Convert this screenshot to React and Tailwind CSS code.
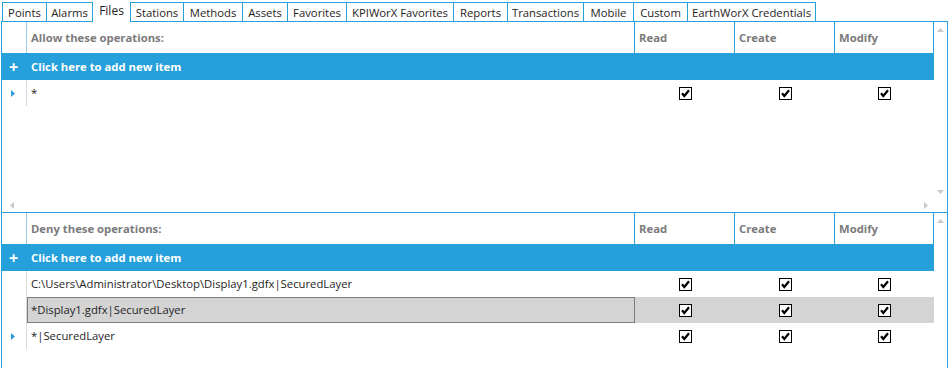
import React from "react";

const tabs = [
  { label: "Points", w: "w-[44px]", cls: "border-l border-t" },
  { label: "Alarms", w: "w-[47px]", cls: "border-l border-r border-t" },
  { label: "Files", w: "w-[37px]", selected: true },
  { label: "Stations", w: "w-[53px]", cls: "border-l border-t" },
  { label: "Methods", w: "w-[59px]", cls: "border-l border-t" },
  { label: "Assets", w: "w-[45px]", cls: "border-l border-t" },
  { label: "Favorites", w: "w-[59px]", cls: "border-l border-t" },
  { label: "KPIWorX Favorites", w: "w-[107px]", cls: "border-l border-t" },
  { label: "Reports", w: "w-[54px]", cls: "border-l border-t" },
  { label: "Transactions", w: "w-[76px]", cls: "border-l border-t" },
  { label: "Mobile", w: "w-[50px]", cls: "border-l border-t" },
  { label: "Custom", w: "w-[54px]", cls: "border-l border-t" },
  { label: "EarthWorX Credentials", w: "w-[129px]", cls: "border-l border-r border-t" },
];

function Check() {
  return (
    <svg width="13" height="13" viewBox="0 0 13 13" className="block">
      <rect x="0.5" y="0.5" width="12" height="12" fill="white" stroke="#000" />
      <polyline points="3,6.3 5.3,9 10,3.3" fill="none" stroke="#000" strokeWidth="2.2" />
    </svg>
  );
}

function RowArrow() {
  return (
    <svg width="5" height="7" viewBox="0 0 5 7" className="block">
      <polygon points="0,0 4,3.5 0,7" fill="#2a9de0" />
    </svg>
  );
}

function Tri({ dir }) {
  const pts = {
    up: "0,4 3.5,0 7,4",
    down: "0,0 3.5,4 7,0",
    left: "4,0 0,3.5 4,7",
    right: "0,0 4,3.5 0,7",
  }[dir];
  const vert = dir === "up" || dir === "down";
  return (
    <svg width={vert ? 7 : 4} height={vert ? 4 : 7} className="block">
      <polygon points={pts} fill="#c9c9c9" />
    </svg>
  );
}

function HeaderRow({ title }) {
  return (
    <div className="flex h-[31px] text-[11.3px] font-bold text-[#7b7b7b]">
      <div className="w-[25px] border-r border-[#9cc9e6]" />
      <div className="w-[608px] border-r border-[#26a0da] flex items-center pl-[4px] pt-[1px]">{title}</div>
      <div className="w-[100px] border-r border-[#26a0da] flex items-center pl-[4px] pt-[1px]">Read</div>
      <div className="w-[100px] border-r border-[#26a0da] flex items-center pl-[4px] pt-[1px]">Create</div>
      <div className="w-[99px] border-r border-[#26a0da] flex items-center pl-[4px] pt-[1px]">Modify</div>
    </div>
  );
}

function AddRow() {
  return (
    <div className="flex h-[27px] bg-[#26a0da] text-white text-[11.3px] font-bold items-center">
      <div className="w-[25px] flex justify-center text-[16px] leading-none font-bold pr-[2px]">+</div>
      <div className="pl-[4px] pt-[1px]">Click here to add new item</div>
    </div>
  );
}

function DataRow({ text, arrow, selected }) {
  return (
    <div className="flex h-[26px] text-[11.3px] text-[#1e1e1e]">
      <div className="w-[25px] border-r border-[#d9d9d9] flex items-center justify-center pr-[2px]">
        {arrow && <RowArrow />}
      </div>
      <div className={`flex flex-1 ${selected ? "bg-[#d5d4d5]" : ""}`}>
        <div className={`w-[608px] flex items-center pt-[1px] ${selected ? "border border-[#7d7d7d] pl-[3px]" : "pl-[4px]"}`}>
          {text}
        </div>
        <div className="w-[100px] flex items-center justify-center"><Check /></div>
        <div className="w-[100px] flex items-center justify-center"><Check /></div>
        <div className="w-[99px] flex items-center justify-center"><Check /></div>
      </div>
    </div>
  );
}

export default function App() {
  return (
    <div className="w-[952px] h-[368px] bg-white overflow-hidden pl-px" style={{ fontFamily: '"Segoe UI", "Open Sans", "Liberation Sans", sans-serif' }}>
      <div className="flex items-end h-[21px] ml-px">
        {tabs.map((t) =>
          t.selected ? (
            <div
              key={t.label}
              className={`${t.w} h-[22px] -mb-px bg-white relative z-10 flex justify-center pt-[2px] text-[12px] text-[#1e1e1e]`}
            >
              {t.label}
            </div>
          ) : (
            <div
              key={t.label}
              className={`${t.w} ${t.cls} border-[#26a0da] h-[19px] flex items-center justify-center pt-[1px] text-[11.3px] text-[#1e1e1e] leading-none`}
            >
              {t.label}
            </div>
          )
        )}
      </div>

      <div className="w-[947px] h-[347px] border-l border-r border-t border-[#26a0da] flex flex-col">
        <div className="flex h-[191px] border-b border-[#26a0da]">
          <div className="w-[932px] flex flex-col">
            <HeaderRow title="Allow these operations:" />
            <AddRow />
            <DataRow text="*" arrow />
            <div className="flex-1" />
            <div className="h-[14px] flex items-center justify-between pl-[8px] pr-[6px]">
              <Tri dir="left" />
              <Tri dir="right" />
            </div>
          </div>
          <div className="w-[13px] flex flex-col items-center justify-between pt-[6px] pb-[18px]">
            <Tri dir="up" />
            <Tri dir="down" />
          </div>
        </div>

        <div className="flex flex-1">
          <div className="w-[932px] flex flex-col">
            <HeaderRow title="Deny these operations:" />
            <AddRow />
            <DataRow text="C:\Users\Administrator\Desktop\Display1.gdfx|SecuredLayer" />
            <DataRow text="*Display1.gdfx|SecuredLayer" selected />
            <DataRow text="*|SecuredLayer" arrow />
          </div>
          <div className="w-[13px] flex flex-col items-center pt-[6px]">
            <Tri dir="up" />
          </div>
        </div>
      </div>
    </div>
  );
}
